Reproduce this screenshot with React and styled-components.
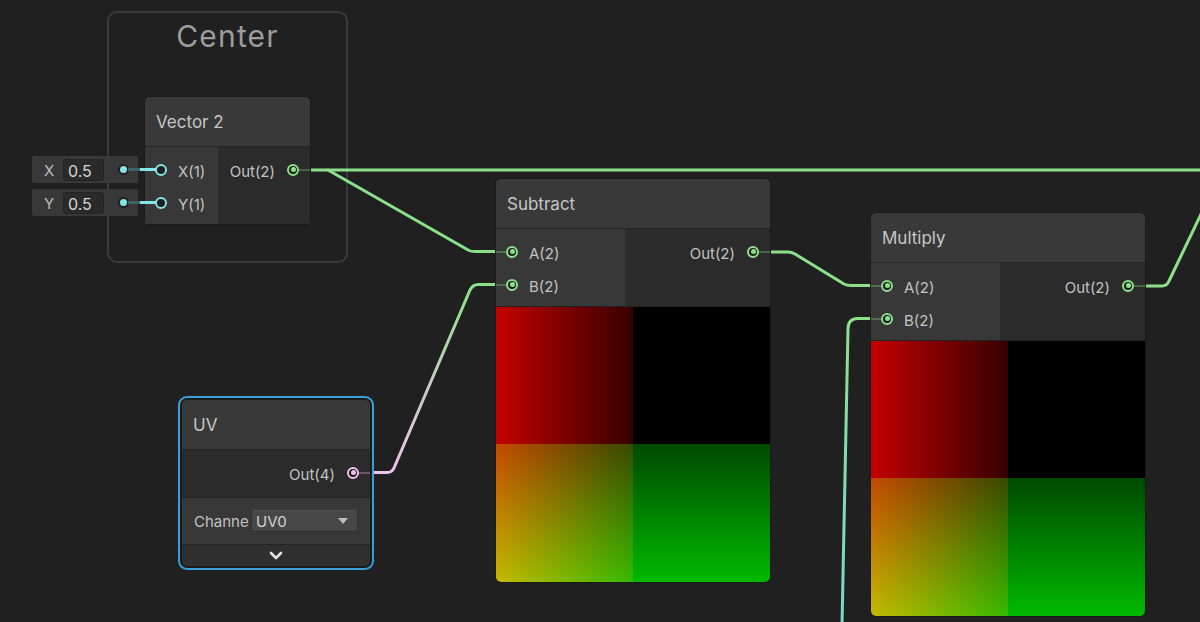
import React from 'react';
import styled, { createGlobalStyle } from 'styled-components';

const GREEN = '#8de08a';
const CYAN = '#84e4e7';
const PINK = '#f3bff0';

const GlobalStyle = createGlobalStyle`
  html, body {
    margin: 0;
    padding: 0;
    background: #202020;
  }
  body {
    font-family: Inter, "Noto Sans", sans-serif;
    overflow: hidden;
  }
`;

const Canvas = styled.div`
  position: relative;
  width: 1200px;
  height: 622px;
  overflow: hidden;
  background: #202020;
`;

const WireLayer = styled.svg`
  position: absolute;
  left: 0;
  top: 0;
  width: 1200px;
  height: 622px;
  pointer-events: none;
  z-index: ${p => (p.$over ? 3 : 1)};
`;

const Group = styled.div`
  position: absolute;
  left: ${p => p.$x}px;
  top: ${p => p.$y}px;
  width: ${p => p.$w}px;
  height: ${p => p.$h}px;
  box-sizing: border-box;
  border: 2px solid #3a3a3a;
  border-radius: 10px;
  z-index: 0;
`;

const GroupTitle = styled.div`
  margin-top: 5px;
  text-align: center;
  font-size: 30px;
  letter-spacing: 1.2px;
  color: #9d9d9d;
`;

const Node = styled.div`
  position: absolute;
  left: ${p => p.$x}px;
  top: ${p => p.$y}px;
  width: ${p => p.$w}px;
  display: flex;
  flex-direction: column;
  border-radius: 5px;
  background: #2b2b2b;
  box-shadow: ${p =>
    p.$selected
      ? '0 0 0 2px #1b1b1b, 0 0 0 4px #3a9fd9'
      : '0 0 0 1px #1a1a1a'};
  z-index: 2;
`;

const NodeHeader = styled.div`
  height: 50px;
  display: flex;
  align-items: center;
  padding: 1px 0 0 11px;
  box-sizing: border-box;
  background: #393939;
  border-bottom: 1px solid #252525;
  border-radius: 5px 5px 0 0;
  font-size: 17px;
  color: #c6c6c6;
`;

const NodeBody = styled.div`
  display: flex;
`;

const SlotColumn = styled.div`
  display: flex;
  flex-direction: column;
  padding: 6px 0 5px;
  background: ${p => (p.$inputs ? '#383838' : '#2b2b2b')};
  width: ${p => (p.$w ? `${p.$w}px` : 'auto')};
  flex: ${p => (p.$w ? 'none' : '1')};
`;

const SlotRow = styled.div`
  height: 33px;
  display: flex;
  align-items: center;
  justify-content: ${p => (p.$out ? 'flex-end' : 'flex-start')};
  padding: ${p => (p.$out ? '0 11px 0 0' : '0 0 0 10px')};
  gap: ${p => (p.$out ? '12px' : '11px')};
  font-size: 15px;
  color: #c2c2c2;
`;

const SlotLabel = styled.span`
  padding-top: 4px;
`;

const Port = styled.span`
  position: relative;
  flex: none;
  width: 12px;
  height: 12px;
  box-sizing: border-box;
  border: 2px solid ${p => p.$color};
  border-radius: 50%;
  background: #1e1e1e;

  &::after {
    content: '';
    position: absolute;
    left: 1.5px;
    top: 1.5px;
    width: 5px;
    height: 5px;
    border-radius: 50%;
    background: ${p => (p.$filled ? p.$color : 'transparent')};
  }

  &::before {
    content: '';
    display: ${p => (p.$stub ? 'block' : 'none')};
    position: absolute;
    top: 3px;
    height: 2px;
    left: ${p => (p.$out ? '10px' : '-12px')};
    width: ${p => (p.$out ? '11px' : '10px')};
    background: ${p => p.$color};
    opacity: 0.3;
  }
`;

const Preview = styled.div`
  height: 275px;
  border-top: 1px solid #222;
  border-radius: 0 0 5px 5px;
  background-color: #000;
  background-image:
    linear-gradient(to right, #c40000 0%, #360000 50%, #000 50%, #000 100%),
    linear-gradient(to bottom, #000 0%, #000 50%, #004a00 50%, #00b900 100%);
  background-blend-mode: screen;
`;

const InlineStack = styled.div`
  position: absolute;
  left: 32px;
  top: 156px;
  display: flex;
  flex-direction: column;
  gap: 6px;
  z-index: 2;
`;

const InlineBox = styled.div`
  width: 106px;
  height: 27px;
  display: flex;
  align-items: center;
  background: #383838;
  border-radius: 2px;
`;

const InlineLabel = styled.span`
  width: 18px;
  margin-left: 8px;
  padding-top: 2px;
  text-align: center;
  font-size: 15px;
  color: #bcbcbc;
`;

const InlineField = styled.span`
  width: 41px;
  height: 22px;
  margin-left: 5px;
  box-sizing: border-box;
  display: flex;
  align-items: center;
  padding: 2px 0 0 4px;
  background: #2a2a2a;
  border: 1px solid #232323;
  border-radius: 3px;
  font-size: 16px;
  color: #d6d6d6;
`;

const InlineDot = styled.span`
  width: 7px;
  height: 7px;
  margin: 0 11px 0 auto;
  border-radius: 50%;
  background: ${CYAN};
  box-shadow: 0 0 0 2px #1f1f1f;
`;

const UVOutBody = styled.div`
  padding: 6px 0 8px;
  background: #2b2b2b;
`;

const ControlRow = styled.div`
  height: 46px;
  display: flex;
  align-items: center;
  padding-left: 12px;
  background: #383838;
  border-top: 1px solid #252525;
`;

const ControlLabel = styled.span`
  width: 57px;
  overflow: hidden;
  white-space: nowrap;
  font-size: 15px;
  color: #c2c2c2;
`;

const Dropdown = styled.div`
  width: 107px;
  height: 22px;
  box-sizing: border-box;
  display: flex;
  align-items: center;
  justify-content: space-between;
  padding: 0 9px 0 4px;
  background: #474747;
  border: 1px solid #303030;
  border-top-color: #505050;
  border-radius: 3px;
  font-size: 15px;
  color: #d4d4d4;
`;

const Caret = styled.span`
  width: 0;
  height: 0;
  border-left: 5px solid transparent;
  border-right: 5px solid transparent;
  border-top: 6px solid #bdbdbd;
`;

const CollapseBar = styled.div`
  height: 21px;
  display: flex;
  align-items: center;
  justify-content: center;
  background: #2f2f2f;
  border-top: 1px solid #252525;
  border-radius: 0 0 5px 5px;
`;

const Slot = ({ label, color, out, filled, stub }) => (
  <SlotRow $out={out}>
    {out && <SlotLabel>{label}</SlotLabel>}
    <Port $color={color} $filled={filled} $stub={stub} $out={out} />
    {!out && <SlotLabel>{label}</SlotLabel>}
  </SlotRow>
);

const MathNode = ({ title, x, y }) => (
  <Node $x={x} $y={y} $w={274}>
    <NodeHeader>{title}</NodeHeader>
    <NodeBody>
      <SlotColumn $inputs $w={129}>
        <Slot label="A(2)" color={GREEN} filled stub />
        <Slot label="B(2)" color={GREEN} filled stub />
      </SlotColumn>
      <SlotColumn>
        <Slot label="Out(2)" color={GREEN} out filled stub />
      </SlotColumn>
    </NodeBody>
    <Preview />
  </Node>
);

const App = () => (
  <>
    <GlobalStyle />
    <Canvas>
      <Group $x={107} $y={11} $w={241} $h={252}>
        <GroupTitle>Center</GroupTitle>
      </Group>

      <WireLayer viewBox="0 0 1200 622">
        <defs>
          <linearGradient id="uvWire" gradientUnits="userSpaceOnUse" x1="0" y1="473" x2="0" y2="285">
            <stop offset="0" stopColor={PINK} />
            <stop offset="1" stopColor={GREEN} />
          </linearGradient>
          <linearGradient id="floatWire" gradientUnits="userSpaceOnUse" x1="0" y1="622" x2="0" y2="318">
            <stop offset="0" stopColor="#78d8cf" />
            <stop offset="1" stopColor={GREEN} />
          </linearGradient>
        </defs>
        <g fill="none" strokeWidth="3" strokeLinecap="round" strokeLinejoin="round">
          <path d="M310 170 H1205" stroke={GREEN} />
          <path d="M328 170 L469 250.5 Q471 251.5 475 251.5 H496" stroke={GREEN} />
          <path d="M770 252 H788 Q792 252 795 254 L844 284 Q847 285.5 851 285.5 H871" stroke={GREEN} />
          <path d="M370 472.5 H387 Q392 472.5 394 468 L470 290 Q473 284.5 478 284.5 H496" stroke="url(#uvWire)" />
          <path d="M1145 286 H1162 Q1167 286 1169 281 L1203 210" stroke={GREEN} />
          <path d="M842 625 L848 329 Q848 318.5 858 318.5 H871" stroke="url(#floatWire)" />
        </g>
      </WireLayer>

      <InlineStack>
        <InlineBox>
          <InlineLabel>X</InlineLabel>
          <InlineField>0.5</InlineField>
          <InlineDot />
        </InlineBox>
        <InlineBox>
          <InlineLabel>Y</InlineLabel>
          <InlineField>0.5</InlineField>
          <InlineDot />
        </InlineBox>
      </InlineStack>

      <Node $x={145} $y={97} $w={165}>
        <NodeHeader>Vector 2</NodeHeader>
        <NodeBody>
          <SlotColumn $inputs $w={73}>
            <Slot label="X(1)" color={CYAN} />
            <Slot label="Y(1)" color={CYAN} />
          </SlotColumn>
          <SlotColumn>
            <Slot label="Out(2)" color={GREEN} out filled stub />
          </SlotColumn>
        </NodeBody>
      </Node>

      <WireLayer $over viewBox="0 0 1200 622">
        <g strokeWidth="3" fill="none">
          <path d="M128 169.5 H140 M128 202.5 H140" stroke="#3f6466" />
          <path d="M140 169.5 H156 M140 202.5 H156" stroke={CYAN} />
        </g>
      </WireLayer>

      <MathNode title="Subtract" x={496} y={179} />
      <MathNode title="Multiply" x={871} y={213} />

      <Node $x={182} $y={400} $w={188} $selected>
        <NodeHeader>UV</NodeHeader>
        <UVOutBody>
          <Slot label="Out(4)" color={PINK} out filled stub />
        </UVOutBody>
        <ControlRow>
          <ControlLabel>Channe</ControlLabel>
          <Dropdown>
            <span>UV0</span>
            <Caret />
          </Dropdown>
        </ControlRow>
        <CollapseBar>
          <svg width="14" height="9" viewBox="0 0 14 9">
            <path d="M2 2 L7 7 L12 2" fill="none" stroke="#e2e2e2" strokeWidth="2.6" strokeLinecap="round" strokeLinejoin="round" />
          </svg>
        </CollapseBar>
      </Node>
    </Canvas>
  </>
);

export default App;
